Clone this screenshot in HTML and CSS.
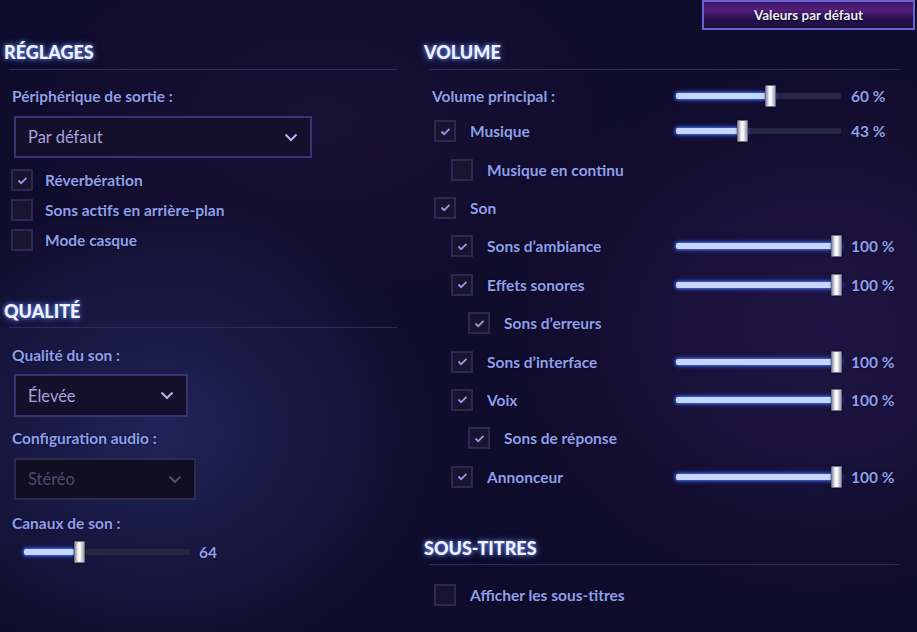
FILE: index.html
```html
<!DOCTYPE html>
<html lang="fr">
<head>
<meta charset="utf-8">
<link rel="stylesheet" href="styles.css">
</head>
<body>
<div class="page">
  <div class="topbar">
    <button class="btn-default">Valeurs par défaut</button>
  </div>
  <div class="columns">
    <section class="col col-left">
      <h2 class="heading">RÉGLAGES</h2>
      <div class="divider"></div>
      <div class="label lbl-device">Périphérique de sortie :</div>
      <div class="select select-device"><span>Par défaut</span><svg class="chev" viewBox="0 0 14 9" width="14" height="9"><path d="M1.5 1.5 L7 7 L12.5 1.5" fill="none" stroke="currentColor" stroke-width="2"/></svg></div>
      <div class="checks">
        <div class="crow"><span class="cb on"><svg viewBox="0 0 12 10" width="11" height="9"><path d="M1.5 5 L4.5 8 L10.5 2" fill="none" stroke="currentColor" stroke-width="2"/></svg></span><span class="clabel">Réverbération</span></div>
        <div class="crow"><span class="cb"></span><span class="clabel">Sons actifs en arrière-plan</span></div>
        <div class="crow"><span class="cb"></span><span class="clabel">Mode casque</span></div>
      </div>
      <h2 class="heading h-quality">QUALITÉ</h2>
      <div class="divider d-quality"></div>
      <div class="label lbl-q1">Qualité du son :</div>
      <div class="select select-q"><span>Élevée</span><svg class="chev" viewBox="0 0 14 9" width="14" height="9"><path d="M1.5 1.5 L7 7 L12.5 1.5" fill="none" stroke="currentColor" stroke-width="2"/></svg></div>
      <div class="label lbl-q2">Configuration audio :</div>
      <div class="select select-cfg disabled"><span>Stéréo</span><svg class="chev" viewBox="0 0 14 9" width="14" height="9"><path d="M1.5 1.5 L7 7 L12.5 1.5" fill="none" stroke="currentColor" stroke-width="2"/></svg></div>
      <div class="label lbl-q3">Canaux de son :</div>
      <div class="srow-left">
        <div class="slider s-left"><div class="fill" style="width:30%"></div><div class="thumb" style="left:30%"></div></div>
        <span class="val">64</span>
      </div>
    </section>

    <section class="col col-right">
      <h2 class="heading">VOLUME</h2>
      <div class="divider"></div>
      <div class="vrow vmain">
        <div class="vlabel"><span class="label">Volume principal :</span></div>
        <div class="slider"><div class="fill" style="width:60%"></div><div class="thumb" style="left:60%"></div></div>
        <span class="val">60 %</span>
      </div>
      <div class="vlist">
        <div class="vrow lv1">
          <div class="vlabel"><span class="cb on"><svg viewBox="0 0 12 10" width="11" height="9"><path d="M1.5 5 L4.5 8 L10.5 2" fill="none" stroke="currentColor" stroke-width="2"/></svg></span><span class="clabel">Musique</span></div>
          <div class="slider"><div class="fill" style="width:43%"></div><div class="thumb" style="left:43%"></div></div>
          <span class="val">43 %</span>
        </div>
        <div class="vrow lv2">
          <div class="vlabel"><span class="cb"></span><span class="clabel">Musique en continu</span></div>
        </div>
        <div class="vrow lv1">
          <div class="vlabel"><span class="cb on"><svg viewBox="0 0 12 10" width="11" height="9"><path d="M1.5 5 L4.5 8 L10.5 2" fill="none" stroke="currentColor" stroke-width="2"/></svg></span><span class="clabel">Son</span></div>
        </div>
        <div class="vrow lv2">
          <div class="vlabel"><span class="cb on"><svg viewBox="0 0 12 10" width="11" height="9"><path d="M1.5 5 L4.5 8 L10.5 2" fill="none" stroke="currentColor" stroke-width="2"/></svg></span><span class="clabel">Sons d’ambiance</span></div>
          <div class="slider"><div class="fill" style="width:100%"></div><div class="thumb" style="left:100%"></div></div>
          <span class="val">100 %</span>
        </div>
        <div class="vrow lv2">
          <div class="vlabel"><span class="cb on"><svg viewBox="0 0 12 10" width="11" height="9"><path d="M1.5 5 L4.5 8 L10.5 2" fill="none" stroke="currentColor" stroke-width="2"/></svg></span><span class="clabel">Effets sonores</span></div>
          <div class="slider"><div class="fill" style="width:100%"></div><div class="thumb" style="left:100%"></div></div>
          <span class="val">100 %</span>
        </div>
        <div class="vrow lv3">
          <div class="vlabel"><span class="cb on"><svg viewBox="0 0 12 10" width="11" height="9"><path d="M1.5 5 L4.5 8 L10.5 2" fill="none" stroke="currentColor" stroke-width="2"/></svg></span><span class="clabel">Sons d’erreurs</span></div>
        </div>
        <div class="vrow lv2">
          <div class="vlabel"><span class="cb on"><svg viewBox="0 0 12 10" width="11" height="9"><path d="M1.5 5 L4.5 8 L10.5 2" fill="none" stroke="currentColor" stroke-width="2"/></svg></span><span class="clabel">Sons d’interface</span></div>
          <div class="slider"><div class="fill" style="width:100%"></div><div class="thumb" style="left:100%"></div></div>
          <span class="val">100 %</span>
        </div>
        <div class="vrow lv2">
          <div class="vlabel"><span class="cb on"><svg viewBox="0 0 12 10" width="11" height="9"><path d="M1.5 5 L4.5 8 L10.5 2" fill="none" stroke="currentColor" stroke-width="2"/></svg></span><span class="clabel">Voix</span></div>
          <div class="slider"><div class="fill" style="width:100%"></div><div class="thumb" style="left:100%"></div></div>
          <span class="val">100 %</span>
        </div>
        <div class="vrow lv3">
          <div class="vlabel"><span class="cb on"><svg viewBox="0 0 12 10" width="11" height="9"><path d="M1.5 5 L4.5 8 L10.5 2" fill="none" stroke="currentColor" stroke-width="2"/></svg></span><span class="clabel">Sons de réponse</span></div>
        </div>
        <div class="vrow lv2">
          <div class="vlabel"><span class="cb on"><svg viewBox="0 0 12 10" width="11" height="9"><path d="M1.5 5 L4.5 8 L10.5 2" fill="none" stroke="currentColor" stroke-width="2"/></svg></span><span class="clabel">Annonceur</span></div>
          <div class="slider"><div class="fill" style="width:100%"></div><div class="thumb" style="left:100%"></div></div>
          <span class="val">100 %</span>
        </div>
      </div>
      <h2 class="heading h-subs">SOUS-TITRES</h2>
      <div class="divider d-subs"></div>
      <div class="vrow lv1 subs-row">
        <div class="vlabel"><span class="cb"></span><span class="clabel">Afficher les sous-titres</span></div>
      </div>
    </section>
  </div>
</div>
</body>
</html>
```

FILE: styles.css
```css
* { box-sizing: border-box; }
html, body { margin: 0; padding: 0; }
body {
  width: 917px;
  height: 632px;
  overflow: hidden;
  font-family: "Lato", "Open Sans", sans-serif;
  font-weight: 700;
  color: #8d9de8;
  background:
    radial-gradient(ellipse 280px 240px at 160px 430px, rgba(42, 52, 118, 0.6), transparent),
    radial-gradient(ellipse 320px 280px at 820px 330px, rgba(44, 28, 88, 0.55), transparent),
    radial-gradient(ellipse 320px 200px at 320px 120px, rgba(34, 22, 66, 0.45), transparent),
    #100c2c;
}
.page { width: 917px; height: 632px; }

.topbar {
  height: 30px;
  display: flex;
  justify-content: flex-end;
  padding-right: 2px;
}
.btn-default {
  width: 213px;
  height: 30px;
  margin: 0;
  border: 2px solid #6b62d6;
  background: linear-gradient(#3a1260 0%, #52207a 30%, #2a1250 65%, #1a0f3a 100%);
  color: #ecebfa;
  font-family: "Lato", sans-serif;
  font-weight: 700;
  font-size: 13.5px;
  text-shadow: 0 1px 2px #000;
  padding: 0 0 1px;
}

.columns {
  display: grid;
  grid-template-columns: 397px 476px;
  column-gap: 27px;
}
.col-left { padding-left: 4px; }

.heading {
  margin: 12px 0 0;
  font-size: 18px;
  line-height: 20px;
  font-weight: 900;
  color: #f0f3ff;
  letter-spacing: 0;
  text-shadow: 0 0 4px rgba(120, 160, 255, 0.9), 0 0 8px rgba(90, 130, 255, 0.5);
}
.divider {
  height: 1px;
  margin: 7px 0 0 5px;
  background: #2b2c60;
}

.label {
  display: block;
  font-size: 15.5px;
  line-height: 20px;
  color: #8e9fec;
  text-shadow: 0 0 2px rgba(0,0,0,0.6);
  white-space: nowrap;
}
.col-left .label { margin-left: 8px; }
.lbl-device { margin-top: 16px; }

.select {
  display: flex;
  align-items: center;
  justify-content: space-between;
  height: 42px;
  margin-left: 10px;
  padding: 0 12px 0 12px;
  border: 2px solid #3a3272;
  background: #140f2a;
  color: #a9a0dc;
  font-size: 16.5px;
  font-weight: 400;
}
.select span { font-family: "Lato", sans-serif; font-weight: 400; }
.select .chev { color: #b8b0ea; }
.select-device { width: 298px; margin-top: 10px; }
.select-q { width: 174px; margin-top: 9px; height: 43px; }
.select-cfg { width: 182px; margin-top: 10px; }
.select.disabled { color: #4f4a6e; border-color: #2e2a4c; background: #110d22; }
.select.disabled .chev { color: #4f4a6e; }

.checks { margin-top: 7px; margin-left: 7px; }
.crow {
  display: flex;
  align-items: center;
  height: 30px;
}
.cb {
  flex: none;
  width: 22px;
  height: 22px;
  border: 2px solid #2d2850;
  background: #18132e;
  display: flex;
  align-items: center;
  justify-content: center;
  color: #a98de8;
}
.clabel {
  font-size: 15.5px;
  color: #8e9fec;
  margin-left: 12px;
  text-shadow: 0 0 2px rgba(0,0,0,0.6);
  white-space: nowrap;
}

.h-quality { margin-top: 46px; }
.d-quality { margin-top: 6px; }
.lbl-q1 { margin-top: 17px; }
.lbl-q2 { margin-top: 11px; }
.lbl-q3 { margin-top: 13px; }

.srow-left {
  display: flex;
  align-items: center;
  height: 20px;
  margin-top: 9px;
  margin-left: 20px;
}
.s-left { width: 167px; }
.srow-left .val { margin-left: 10px; }

.slider {
  position: relative;
  width: 165px;
  height: 6px;
  background: #252743;
  border-radius: 1px;
}
.fill {
  height: 6px;
  background: #c6d6ff;
  border-radius: 2px;
  box-shadow: 0 0 3px 1px rgba(70, 120, 255, 0.85), 0 0 6px rgba(60, 100, 255, 0.5);
}
.thumb {
  position: absolute;
  top: -8px;
  width: 11px;
  height: 22px;
  margin-left: -10px;
  border: 1px solid #6f7186;
  background: linear-gradient(90deg, #8e8fa0 0%, #f4f4fa 35%, #ffffff 55%, #9c9db0 100%);
  box-shadow: 0 0 2px rgba(0,0,0,0.8);
  border-radius: 1px;
}
.s-left .thumb { margin-left: 0; }
.val {
  font-size: 15.5px;
  color: #8e9fec;
  text-shadow: 0 0 2px rgba(0,0,0,0.6);
  white-space: nowrap;
}

.vrow {
  display: grid;
  grid-template-columns: 242px 165px 1fr;
  column-gap: 10px;
  align-items: center;
}
.vlabel { display: flex; align-items: center; }
.vmain { height: 20px; margin-top: 16px; }
.vmain .vlabel { padding-left: 8px; }
.vlist { margin-top: 6px; }
.vlist .vrow { height: 38.4px; }
.lv1 .vlabel { padding-left: 10px; }
.lv2 .vlabel { padding-left: 27px; }
.lv3 .vlabel { padding-left: 44px; }
.vrow .clabel { margin-left: 14px; }

.h-subs { margin-top: 42px; }
.d-subs { margin-top: 6px; }
.subs-row { height: 22px; margin-top: 19px; }
```
